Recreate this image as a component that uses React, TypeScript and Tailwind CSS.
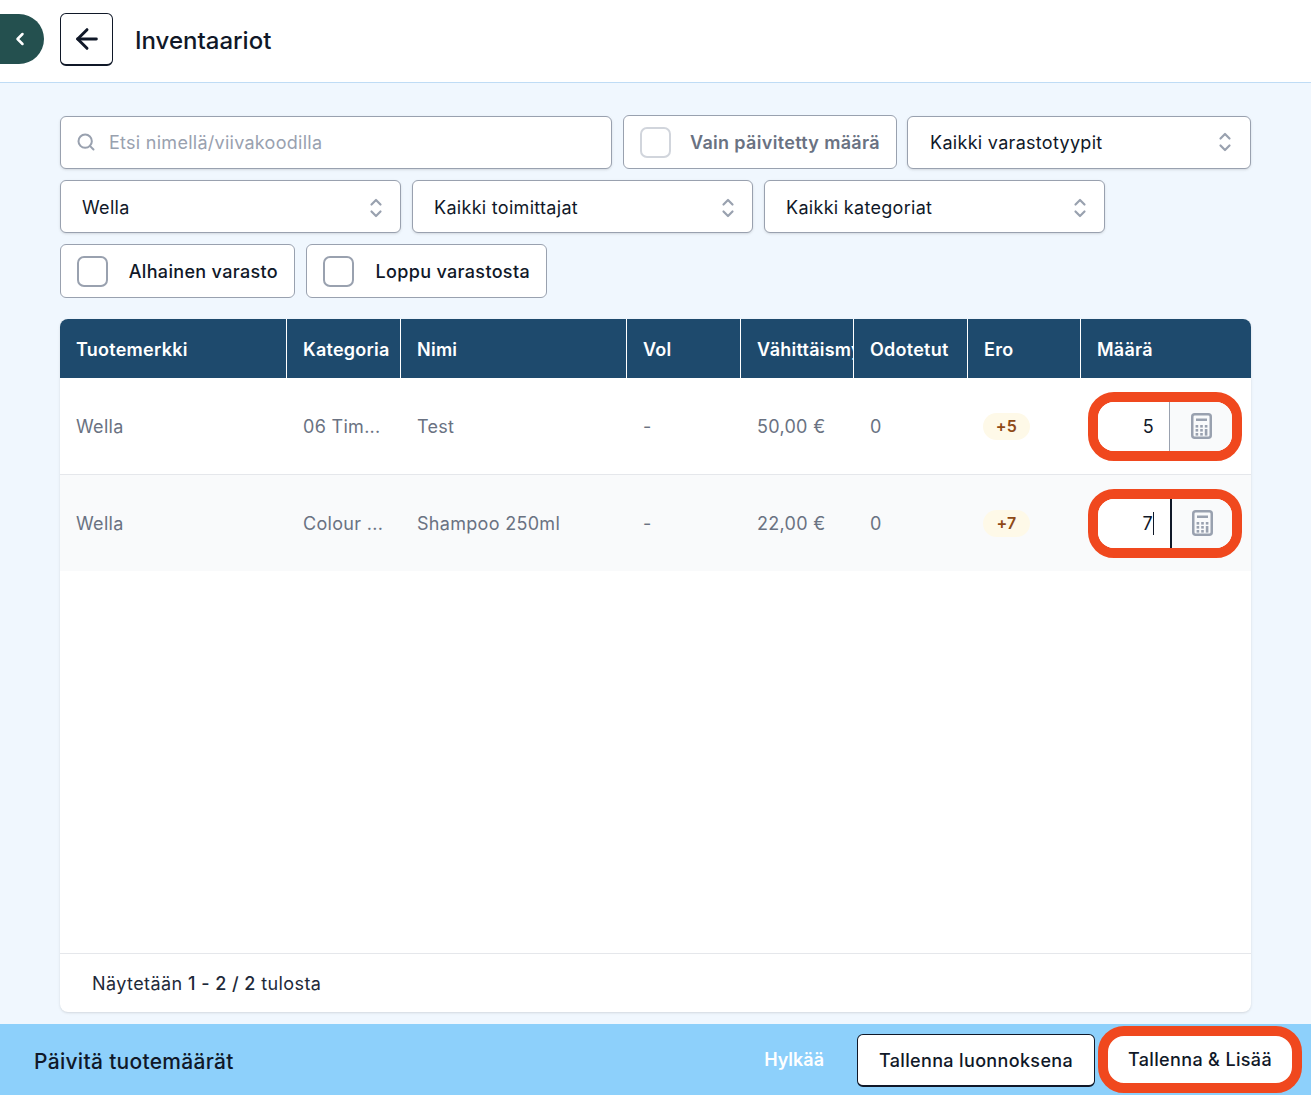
import { ArrowLeft, ChevronLeft, Search } from "lucide-react";

const columns = "grid grid-cols-[227px_114px_226px_114px_113px_114px_113px_171px]";

const headers = ["Tuotemerkki", "Kategoria", "Nimi", "Vol", "Vähittäismyyntihinta", "Odotetut", "Ero", "Määrä"];

const rows = [
  { brand: "Wella", category: "06 Tim...", name: "Test", vol: "-", price: "50,00 €", expected: "0", diff: "+5", qty: "5", active: false },
  { brand: "Wella", category: "Colour ...", name: "Shampoo 250ml", vol: "-", price: "22,00 €", expected: "0", diff: "+7", qty: "7", active: true },
];

function SelectIcon() {
  return (
    <svg width="20" height="24" viewBox="0 0 20 24" fill="none" className="shrink-0 text-gray-400">
      <path d="M5.5 8.5 10 4l4.5 4.5" stroke="currentColor" strokeWidth="2.2" strokeLinecap="round" strokeLinejoin="round" />
      <path d="M5.5 15.5 10 20l4.5-4.5" stroke="currentColor" strokeWidth="2.2" strokeLinecap="round" strokeLinejoin="round" />
    </svg>
  );
}

function CalculatorIcon() {
  return (
    <svg width="21" height="26" viewBox="0 0 21 26" fill="none" className="text-gray-400">
      <rect x="1.25" y="1.25" width="18.5" height="23.5" rx="2.5" stroke="currentColor" strokeWidth="2.5" />
      <g fill="currentColor">
        <rect x="5" y="5.5" width="11" height="2.5" />
        <rect x="4.6" y="12" width="2.6" height="2.6" />
        <rect x="9.2" y="12" width="2.6" height="2.6" />
        <rect x="13.8" y="12" width="2.6" height="2.6" />
        <rect x="4.6" y="16" width="2.6" height="2.6" />
        <rect x="9.2" y="16" width="2.6" height="2.6" />
        <rect x="13.8" y="16" width="2.6" height="6.6" />
        <rect x="4.6" y="20" width="2.6" height="2.6" />
        <rect x="9.2" y="20" width="2.6" height="2.6" />
      </g>
    </svg>
  );
}

function Select({ label, className }: { label: string; className: string }) {
  return (
    <div className={`flex h-[53px] items-center justify-between rounded-md border border-gray-400 bg-white text-[18px] tracking-[0.3px] text-gray-900 shadow-sm ${className}`}>
      <span>{label}</span>
      <SelectIcon />
    </div>
  );
}

function CheckFilter({ label, className, disabled }: { label: string; className: string; disabled?: boolean }) {
  return (
    <label className={`flex h-[54px] items-center justify-between rounded-md border border-gray-400 bg-white px-4 text-[18px] tracking-[0.33px] ${className} ${disabled ? "font-semibold text-gray-500" : "font-medium text-gray-900"}`}>
      <span className={`h-[31px] w-[31px] rounded-[7px] border-2 ${disabled ? "border-gray-300" : "border-gray-400"}`} />
      <span>{label}</span>
    </label>
  );
}

export default function App() {
  return (
    <div className="flex h-screen flex-col overflow-hidden bg-[#f0f7fe] font-['Inter',sans-serif] text-gray-900">
      {/* Top bar */}
      <header className="flex h-[83px] shrink-0 items-center gap-[22px] border-b border-[#bfdcf5] bg-white pb-[4px] pr-4">
        <div className="flex items-center gap-4">
          <button className="flex h-[50px] w-[44px] items-center justify-center rounded-r-[25px] bg-[#24504f] pr-[4px] text-white">
            <ChevronLeft size={20} strokeWidth={3} />
          </button>
          <button className="flex h-[53px] w-[53px] items-center justify-center rounded-md border border-b-2 border-gray-900 bg-white">
            <ArrowLeft size={32} strokeWidth={2.2} />
          </button>
        </div>
        <h1 className="mt-[4px] text-[24px] font-medium">Inventaariot</h1>
      </header>

      <main className="flex min-h-0 flex-1 flex-col px-[60px] pt-[32px]">
        {/* Filters */}
        <div className="flex h-[54px] items-center gap-[11px]">
          <div className="flex h-[53px] w-[552px] items-center gap-[13px] rounded-md border border-gray-400 bg-white pl-[15px] text-[18px] tracking-[0.27px] text-gray-400 shadow-sm">
            <Search size={20} strokeWidth={2.4} />
            <span>Etsi nimellä/viivakoodilla</span>
          </div>
          <CheckFilter label="Vain päivitetty määrä" className="w-[274px]" disabled />
          <Select label="Kaikki varastotyypit" className="ml-[-1px] w-[344px] pl-[22px] pr-[15px]" />
        </div>
        <div className="mt-[11px] flex gap-[11px]">
          <Select label="Wella" className="w-[341px] pl-[21px] pr-[14px] pt-[2px]" />
          <Select label="Kaikki toimittajat" className="w-[341px] pl-[21px] pr-[14px] pt-[2px]" />
          <Select label="Kaikki kategoriat" className="w-[341px] pl-[21px] pr-[14px] pt-[2px]" />
        </div>
        <div className="mt-[11px] flex gap-[11px]">
          <CheckFilter label="Alhainen varasto" className="w-[235px]" />
          <CheckFilter label="Loppu varastosta" className="w-[241px]" />
        </div>

        {/* Table */}
        <section className="mt-[21px] flex min-h-0 flex-1 flex-col rounded-lg bg-white text-[18px] shadow-sm">
          <div className={`${columns} h-[59px] shrink-0 overflow-hidden rounded-t-lg bg-[#1e4a6d] font-semibold tracking-[0.25px] text-white`}>
            {headers.map((h, i) => (
              <div key={h} className={`flex items-center overflow-hidden whitespace-nowrap pl-4 pt-[2px] ${i < headers.length - 1 ? "border-r border-white" : ""}`}>
                {h}
              </div>
            ))}
          </div>
          <div className="flex-1 tracking-[0.3px]">
            {rows.map((row) => (
              <div key={row.name} className={`${columns} items-center text-gray-500 ${row.active ? "h-[96px] bg-gray-50" : "h-[97px] border-b border-gray-200"}`}>
                <div className="pl-4">{row.brand}</div>
                <div className="pl-4">{row.category}</div>
                <div className="pl-4">{row.name}</div>
                <div className="pl-4">{row.vol}</div>
                <div className="pl-4">{row.price}</div>
                <div className="pl-4">{row.expected}</div>
                <div className="pl-[15px]">
                  <span className="inline-flex h-[27px] w-[47px] items-center justify-center rounded-full bg-[#fef9e8] text-[16px] font-semibold text-[#8f4a16]">{row.diff}</span>
                </div>
                <div className="pl-[7px]">
                  <div className="flex h-[69px] w-[154px] overflow-hidden rounded-[26px] border-[10px] border-[#f0481e] bg-white">
                    <div className={`flex flex-1 items-center justify-end bg-white text-gray-900 ${row.active ? "border-r-2 border-gray-900 pr-[16px]" : "border-r border-gray-400 pr-[15px]"}`}>
                      {row.qty}
                      {row.active && <span className="h-[23px] w-px bg-gray-900" />}
                    </div>
                    <div className={`flex items-center justify-center bg-gray-50 ${row.active ? "w-[60px]" : "w-[62px]"}`}>
                      <CalculatorIcon />
                    </div>
                  </div>
                </div>
              </div>
            ))}
          </div>
          <div className="flex h-[59px] shrink-0 items-center border-t border-gray-200 pl-8 tracking-[0.42px] text-gray-800">
            <span>Näytetään <span className="font-medium">1 - 2 / 2</span> tulosta</span>
          </div>
        </section>
      </main>

      {/* Bottom bar */}
      <footer className="mt-[12px] flex h-[71px] shrink-0 items-center justify-between bg-[#8dd0fb] pl-[34px] pr-[9px]">
        <span className="mt-[4px] text-[21px] font-medium tracking-[0.3px]">Päivitä tuotemäärät</span>
        <div className="flex items-center text-[18px] tracking-[0.35px]">
          <button className="mr-[33px] font-semibold tracking-normal text-white">Hylkää</button>
          <button className="mr-[3px] mt-[2px] h-[53px] w-[238px] rounded-md border border-b-2 border-gray-900 bg-white font-medium">Tallenna luonnoksena</button>
          <button className="h-[67px] w-[204px] rounded-[26px] border-[10px] border-[#f0481e] bg-white font-medium">Tallenna &amp; Lisää</button>
        </div>
      </footer>
    </div>
  );
}
